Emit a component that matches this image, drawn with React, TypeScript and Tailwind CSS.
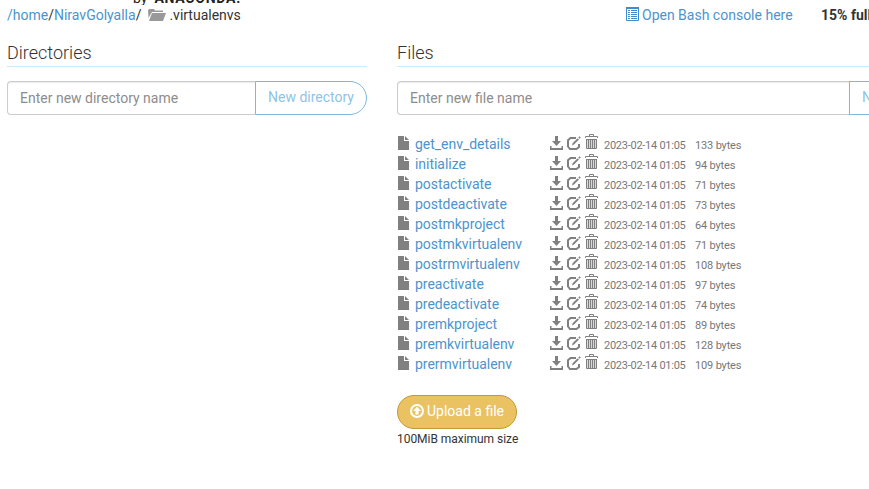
import React from "react";

const files: [string, string][] = [
  ["get_env_details", "133 bytes"],
  ["initialize", "94 bytes"],
  ["postactivate", "71 bytes"],
  ["postdeactivate", "73 bytes"],
  ["postmkproject", "64 bytes"],
  ["postmkvirtualenv", "71 bytes"],
  ["postrmvirtualenv", "108 bytes"],
  ["preactivate", "97 bytes"],
  ["predeactivate", "74 bytes"],
  ["premkproject", "89 bytes"],
  ["premkvirtualenv", "128 bytes"],
  ["prermvirtualenv", "109 bytes"],
];

function FileIcon() {
  return (
    <svg width="11" height="14" viewBox="0 0 11 14" fill="#808080" className="mt-0.5">
      <path d="M0 0H6V5H11V14H0Z M7 0L11 4H7Z" />
    </svg>
  );
}

function DownloadIcon() {
  return (
    <svg width="13" height="14" viewBox="0 0 13 14" fill="#808080" className="mt-0.5">
      <path d="M5 0H8V5H11L6.5 10L2 5H5Z M0 10H1.5V12H11.5V10H13V14H0Z" />
    </svg>
  );
}

function EditIcon() {
  return (
    <svg width="14" height="14" viewBox="0 0 14 14" className="mt-0.5">
      <path d="M9 2H3.5L1 4.2V10.5L3 13H9.5L12 11V8" fill="none" stroke="#808080" strokeWidth="2" />
      <path d="M5 9.5L5.6 7.2L10.6 2.2L12 3.6L7 8.6Z M11.3 1.4L12.4 .3L13.8 1.7L12.7 2.8Z" fill="#808080" />
    </svg>
  );
}

function TrashIcon() {
  return (
    <svg width="13" height="16" viewBox="0 0 13 16" fill="none">
      <path d="M2 6H11V14H2Z" fill="#d8d8d8" />
      <path d="M4.5 2V.5H8.5V2M.5 4V2.5H12.5V4M1 5.5H12M1.5 5V14.5H11.5V5M3.5 6V14M5.5 6V14M7.5 6V14M9.5 6V14" stroke="#808080" />
    </svg>
  );
}

function FolderIcon() {
  return (
    <svg width="18" height="12" viewBox="0 0 18 12" fill="#999">
      <path d="M0 1.5L1 0H6L7 1.5H15V3H4L.5 9Z M4 4H18L15 12H1Z" />
    </svg>
  );
}

function ConsoleIcon() {
  return (
    <svg width="13" height="14" viewBox="0 0 13 14" className="-mt-0.5">
      <path d="M.5 1H12.5V13.5H.5Z" fill="none" stroke="#428bca" />
      <path d="M0 0H13V2H0Z M2 3H4V4H2Z M5 3H11V4H5Z M2 5H4V6H2Z M5 5H11V6H5Z M2 7H4V8H2Z M5 7H11V8H5Z M2 9H4V10H2Z M5 9H11V10H5Z M2 11H4V12H2Z M5 11H11V12H5Z" fill="#428bca" />
    </svg>
  );
}

function UploadIcon() {
  return (
    <svg width="14" height="14" viewBox="0 0 14 14" className="-mt-0.5">
      <circle cx="7" cy="7" r="6" fill="none" stroke="white" strokeWidth="2" />
      <path d="M7 2.8L11 7H8.5V10.5H5.5V7H3Z" fill="white" />
    </svg>
  );
}

export default function App() {
  return (
    <div className="h-[489px] w-[869px] overflow-hidden bg-white font-[Roboto,sans-serif] text-sm leading-5 whitespace-nowrap text-[#333]">
      <div className="flex h-[5px] items-end gap-[7px] overflow-hidden pl-[133px] text-[14px] text-[#222]">
        <span className="h-5 translate-y-[3px]">by</span>
        <span className="h-5 translate-y-[3px] font-bold tracking-[0.75px]">ANACONDA.</span>
      </div>
      <div className="flex h-5 items-center">
        <div className="flex w-[621px] shrink-0 items-center pl-[7px]">
          <span><span className="text-[#4c94ce]">/home</span>/<span className="text-[#4c94ce]">NiravGolyalla</span>/</span>
          <span className="ml-[7px]"><FolderIcon /></span>
          <span className="ml-[3px]">.virtualenvs</span>
        </div>
        <div className="flex w-[193px] shrink-0 items-center gap-[3px] pl-[5px] text-[#4c94ce]">
          <ConsoleIcon />
          <span>Open Bash console here</span>
        </div>
        <span className="shrink-0 pl-[7px] font-bold">15% full</span>
      </div>
      <div className="flex gap-[30px] pt-[15px] pl-[7px]">
        <section className="w-[360px] shrink-0">
          <h2 className="h-[27px] border-b border-[#c9eafc] text-lg leading-[26px] font-light">Directories</h2>
          <div className="mt-[14px] flex h-[34px]">
            <div className="w-[248px] rounded-l border border-r-0 border-[#ccc] pl-3 leading-8 text-[#8d8d8d] shadow-[inset_0_1px_1px_rgba(0,0,0,.08)]">Enter new directory name</div>
            <div className="w-[112px] rounded-r-full border border-[#7db8df] pl-3 leading-[30px] text-[#8fc3e6]">New directory</div>
          </div>
        </section>
        <section className="w-[560px] shrink-0">
          <h2 className="h-[27px] border-b border-[#c9eafc] text-lg leading-[26px] font-light">Files</h2>
          <div className="mt-[14px] flex h-[34px]">
            <div className="w-[452px] rounded-l border border-r-0 border-[#ccc] pl-3 leading-8 text-[#8d8d8d] shadow-[inset_0_1px_1px_rgba(0,0,0,.08)]">Enter new file name</div>
            <div className="w-[108px] border border-[#7db8df] pl-3 leading-[30px] text-[#8fc3e6]">New file</div>
          </div>
          <div className="mt-[19px] pl-px">
            {files.map(([name, size]) => (
              <div key={name} className="grid h-5 grid-cols-[17px_135px_17px_18px_18px_92px_60px]">
                <FileIcon />
                <span className="tracking-[-0.03px] text-[#4c94ce]">{name}</span>
                <DownloadIcon />
                <EditIcon />
                <TrashIcon />
                <span className="pt-[3px] pl-px text-[11px] leading-[17px] tracking-[-0.26px] text-[#777]">2023-02-14 01:05</span>
                <span className="pt-[3px] text-[11px] leading-[17px] tracking-[-0.16px] text-[#777]">{size}</span>
              </div>
            ))}
          </div>
          <button className="mt-[21px] flex h-[34px] w-[120px] items-center gap-[3px] rounded-full border border-[#c49a35] bg-[#eac262] pl-3 text-white">
            <UploadIcon />
            <span className="-mt-0.5">Upload a file</span>
          </button>
          <div className="text-xs leading-5 tracking-[-0.04px]">100MiB maximum size</div>
        </section>
      </div>
    </div>
  );
}
